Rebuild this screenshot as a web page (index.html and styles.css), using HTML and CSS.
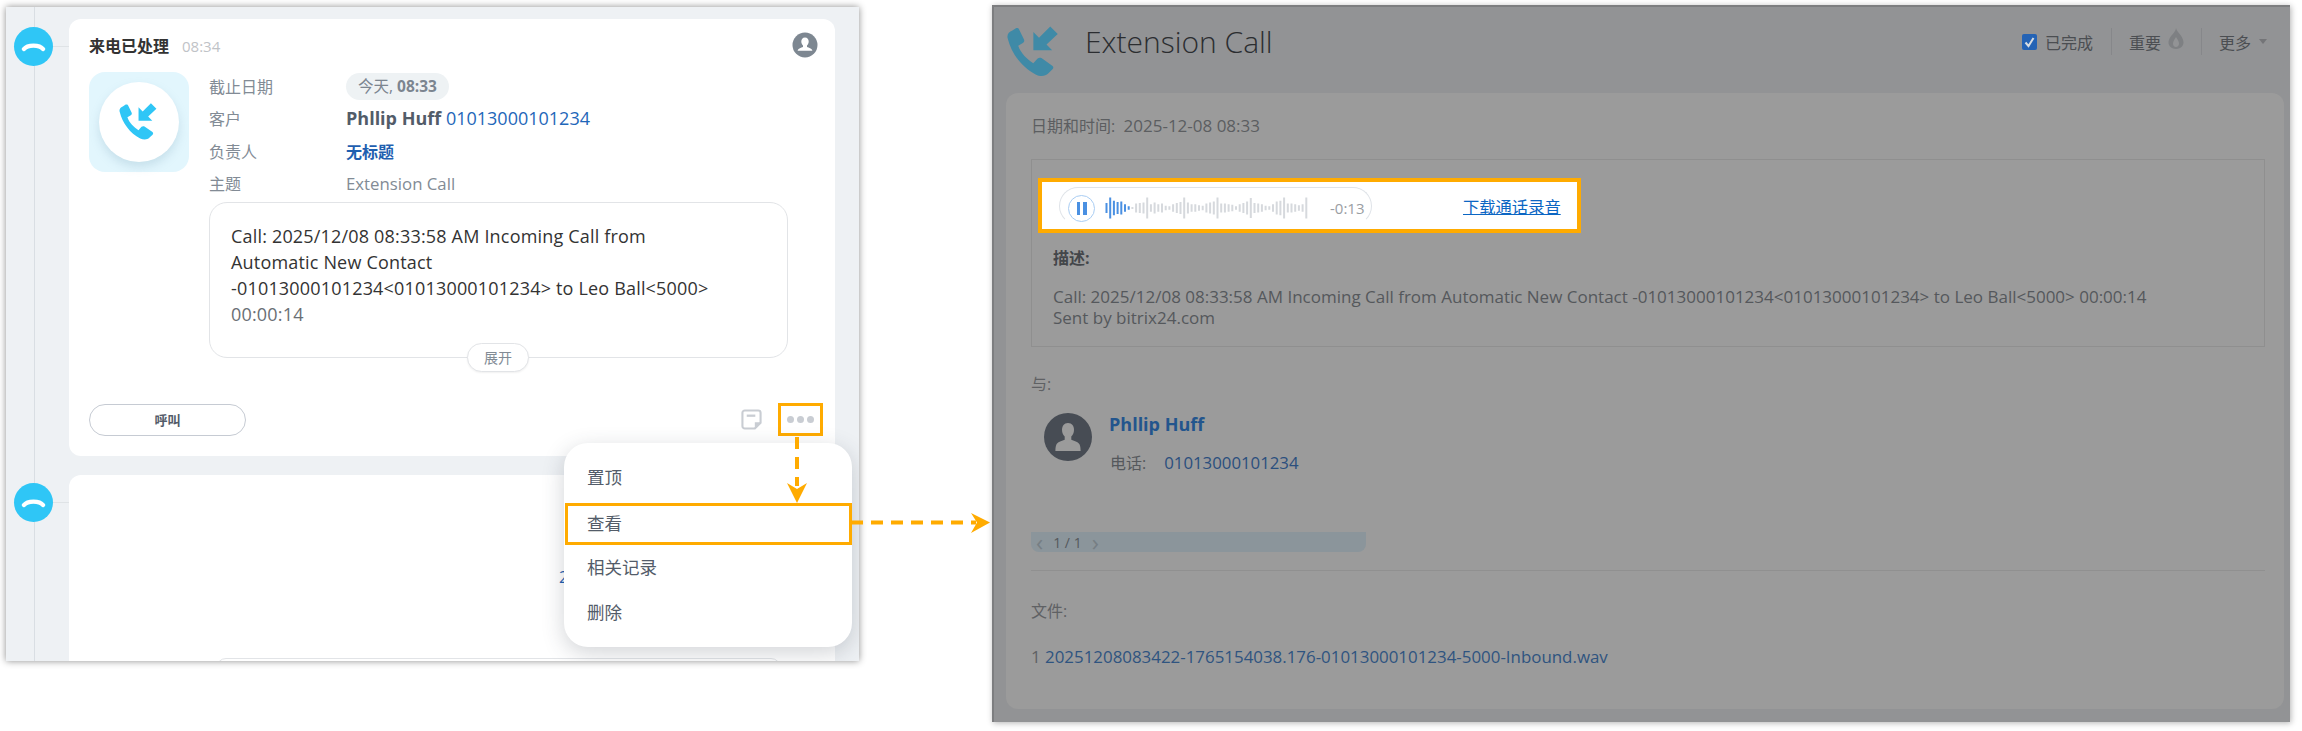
FILE: index.html
```html
<!DOCTYPE html>
<html lang="zh">
<head>
<meta charset="utf-8">
<title>Extension Call</title>
<link rel="stylesheet" href="styles.css">
</head>
<body>
<main class="stage">
  <section class="feed">
    <div class="entry entry-first">
      <div class="rail">
        <span class="rail-dot">
          <svg class="hangup" viewBox="0 0 24 10"><path d="M2.500 7C6 2.500 18 2.500 21.500 7" fill="none" stroke="#fff" stroke-width="4.400" stroke-linecap="round"/></svg>
        </span>
        <span class="rail-tick"></span>
      </div>
      <article class="card">
        <header class="card-head">
          <h2 class="card-title">来电已处理</h2>
          <time class="card-time">08:34</time>
          <svg class="owner" viewBox="0 0 26 26"><circle cx="13" cy="13" r="12.500" fill="#7d8791"/><path d="M13 5.500c2.400 0 3.700 1.900 3.700 4 0 1.800-.8 3.200-1.700 4v1.400c2 .7 4.500 1.500 5.200 3 .2.500 0 .900-.6 .900H6.400c-.6 0-.8-.4-.6-.9.7-1.500 3.200-2.300 5.200-3v-1.400c-.9-.8-1.700-2.200-1.700-4 0-2.100 1.300-4 3.700-4z" fill="#fff"/></svg>
        </header>
        <div class="card-body">
          <div class="tile">
            <span class="tile-disc">
              <svg class="tile-phone" viewBox="0 0 48 48"><path transform="translate(.2 .5) scale(.93 .9)" d="M3 14C2 11 4 8 7 7L10 5C11.500 4.500 12.500 5 13 6.500L17 15C17.500 16.500 17 17.500 16 18L12 20.500C14 27 20 33 25 36L28.500 32C29.500 31 31 31 32 31.500L41 38C42.500 39 42.500 40.500 41.500 41.500L38 45C35 48 31 48 27 46C15 40 6 27 3 14Z" fill="#2fc6f6"/><path d="M23.500 8L28 12.500L37 3.500L43 9.500L34 18L38.500 22.500L23.500 22.500Z" fill="#2fc6f6"/></svg>
            </span>
          </div>
          <div class="details">
            <dl class="facts">
              <dt>截止日期</dt><dd><span class="due">今天, <b>08:33</b></span></dd>
              <dt>客户</dt><dd class="client"><b>Phllip Huff</b> <a>01013000101234</a></dd>
              <dt>负责人</dt><dd class="owner-name">无标题</dd>
              <dt>主题</dt><dd class="subject">Extension Call</dd>
            </dl>
            <div class="message">
              <p>Call: 2025/12/08 08:33:58 AM Incoming Call from<br>Automatic New Contact<br>-01013000101234&lt;01013000101234&gt; to Leo Ball&lt;5000&gt;<br><span class="message-end">00:00:14</span></p>
              <span class="expand">展开</span>
            </div>
          </div>
        </div>
        <footer class="card-foot">
          <button class="call-btn">呼叫</button>
          <svg class="note" viewBox="0 0 22 22"><path d="M4 1.500h14a2.500 2.500 0 0 1 2.500 2.500v10.500l-6 6H4A2.500 2.500 0 0 1 1.500 18V4A2.500 2.500 0 0 1 4 1.500z" fill="none" stroke="#c9cdd3" stroke-width="2.200"/><path d="M6 7h9" stroke="#c9cdd3" stroke-width="2.400"/><path d="M20.500 14h-6v6.500z" fill="#c9cdd3"/></svg>
          <span class="more-box"><i></i><i></i><i></i></span>
        </footer>
      </article>
    </div>
    <div class="entry">
      <div class="rail">
        <span class="rail-dot">
          <svg class="hangup" viewBox="0 0 24 10"><path d="M2.500 7C6 2.500 18 2.500 21.500 7" fill="none" stroke="#fff" stroke-width="4.400" stroke-linecap="round"/></svg>
        </span>
        <span class="rail-tick"></span>
      </div>
      <article class="card card-stub">
        <a class="stub-link">2</a>
        <div class="stub-box"></div>
      </article>
    </div>
    <ul class="menu">
      <li>置顶</li>
      <li class="menu-marked">查看</li>
      <li>相关记录</li>
      <li>删除</li>
    </ul>
  </section>

  <section class="detail">
    <header class="detail-head">
      <svg class="detail-icon" viewBox="0 0 48 48"><path transform="translate(.2 .5) scale(.93 .9)" d="M3 14C2 11 4 8 7 7L10 5C11.500 4.500 12.500 5 13 6.500L17 15C17.500 16.500 17 17.500 16 18L12 20.500C14 27 20 33 25 36L28.500 32C29.500 31 31 31 32 31.500L41 38C42.500 39 42.500 40.500 41.500 41.500L38 45C35 48 31 48 27 46C15 40 6 27 3 14Z" fill="#3f8aa7"/><path d="M23.500 8L28 12.500L37 3.500L43 9.500L34 18L38.500 22.500L23.500 22.500Z" fill="#3f8aa7"/></svg>
      <h1 class="detail-title">Extension Call</h1>
      <div class="tools">
        <span class="tool tool-done">
          <svg class="check" viewBox="0 0 15 16"><rect width="15" height="16" rx="2" fill="#2463b5"/><path d="M3.500 8.500l3 3.500 5-8" fill="none" stroke="#d8dde2" stroke-width="2"/></svg>
          已完成
        </span>
        <span class="tool tool-hot">
          重要
          <svg class="flame" viewBox="0 0 16 21"><path fill-rule="evenodd" d="M8 0c.6 3.400 3.500 5.200 5.500 8.500 2 3.400 3 7 .5 10C12.800 20 10.500 21 8 21s-4.800-1-6-2.500c-2.500-3-1.500-6.500.4-9.500C4.200 6 7.500 4 8 0zm0 9c-1 2-3 4-3 6.500C5 17.500 6.300 19 8 19s3-1.500 3-3.500C11 13 9 11 8 9z" fill="#7e8083"/></svg>
        </span>
        <span class="tool tool-more">更多<i class="caret"></i></span>
      </div>
    </header>
    <div class="sheet">
      <p class="when">日期和时间:&nbsp; <span class="when-date">2025-12-08 08:33</span></p>
      <div class="record">
        <div class="player-mark">
          <div class="player">
            <span class="pause"><i></i><i></i></span>
            <svg class="wave" viewBox="0 0 204 40" preserveAspectRatio="none">
              <path d="M1.500 11v18M5.200 1v38M8.900 7v26M12.600 9v22M16.300 8v24M20 13v14M23.700 17v6" stroke="#4a90e2" stroke-width="2" fill="none"/>
              <path d="M27.400 18v4M31.100 12v16M34.800 11v18M38.500 10v20M42.200 1v38M45.900 13v14M49.600 10v20M53.300 13v14M57 12v16M60.700 16v8M64.400 17v6M68.100 13v14M71.800 11v18M75.500 9v22M79.200 1v38M82.900 10v20M86.600 13v14M90.300 13v14M94 15v10M97.700 16v8M101.400 12v16M105.100 10v20M108.800 8v24M112.500 1v38M116.200 12v16M119.900 12v16M123.600 13v14M127.300 14v12M131 17v6M134.700 13v14M138.400 11v18M142.100 8v24M145.800 2v36M149.500 11v18M153.200 12v16M156.900 13v14M160.600 16v8M164.300 17v6M168 13v14M171.700 8v24M175.400 7v26M179.100 1v38M182.800 12v16M186.500 12v16M190.200 13v14M193.900 15v10M197.600 13v14M201.300 1v38" stroke="#d6d9dd" stroke-width="2" fill="none"/>
            </svg>
            <span class="remain">-0:13</span>
          </div>
          <a class="download">下载通话录音</a>
        </div>
        <h3 class="record-label">描述:</h3>
        <p class="record-text">Call: 2025/12/08 08:33:58 AM Incoming Call from Automatic New Contact -01013000101234&lt;01013000101234&gt; to Leo Ball&lt;5000&gt; 00:00:14<br>Sent by bitrix24.com</p>
      </div>
      <p class="with">与:</p>
      <div class="contact">
        <svg class="avatar" viewBox="0 0 48 48"><circle cx="24" cy="24" r="24" fill="#474c54"/><path d="M24 10c4 0 6 3.300 6 6.800 0 3-1.200 5.400-2.700 6.800v3.200c3.500 1.200 7.300 2.500 8.300 4.700.8 1.800 1 4 1 6.500H11.400c0-2.500.2-4.700 1-6.500 1-2.200 4.800-3.500 8.300-4.700v-3.200c-1.500-1.400-2.700-3.800-2.700-6.800C18 13.300 20 10 24 10z" fill="#9b9b9b"/></svg>
        <div class="contact-info">
          <a class="contact-name">Phllip Huff</a>
          <p class="contact-phone">电话:<a>01013000101234</a></p>
        </div>
      </div>
      <div class="pager"><span class="pager-arrow">‹</span>1 / 1<span class="pager-arrow">›</span></div>
      <hr class="rule">
      <p class="files">文件:</p>
      <p class="file">1 <a>20251208083422-1765154038.176-01013000101234-5000-Inbound.wav</a></p>
    </div>
  </section>

  <svg class="arrows" viewBox="0 0 2302 731">
    <path d="M797 437V486" stroke="#ffab00" stroke-width="4" stroke-dasharray="12 8" fill="none"/>
    <path d="M787 483L797 489L807 483L797 503Z" fill="#ffab00"/>
    <path d="M851 522.500H976" stroke="#ffab00" stroke-width="4" stroke-dasharray="12 8" fill="none"/>
    <path d="M971 513L977 522.500L971 533L990 522.500Z" fill="#ffab00"/>
  </svg>
</main>
</body>
</html>
```
FILE: styles.css
```css
* { box-sizing: border-box; }
html, body { margin: 0; padding: 0; background: #fff; }
body {
  font-family: "Open Sans", "Noto Sans CJK SC", sans-serif;
  width: 2302px;
  height: 731px;
  overflow: hidden;
}
p, h1, h2, h3, dl, dd, ul { margin: 0; padding: 0; }
a { color: inherit; }

.stage {
  position: relative;
  display: flex;
  align-items: flex-start;
  gap: 133px;
  width: 2302px;
  height: 731px;
  padding: 5px 0 0 6px;
}

/* left: activity feed */
.feed {
  position: relative;
  flex: none;
  width: 853px;
  height: 654px;
  margin-top: 2px;
  padding-top: 12px;
  overflow: hidden;
  background: #eef1f4 linear-gradient(#d9dee3, #d9dee3) 28px 0 / 1px 100% no-repeat;
}
.entry { display: flex; margin-bottom: 19px; }
.rail {
  flex: none;
  display: flex;
  align-items: center;
  align-self: flex-start;
  width: 63px;
  margin-top: 8px;
  padding-left: 8px;
}
.rail-dot {
  flex: none;
  display: flex;
  align-items: center;
  justify-content: center;
  width: 39px;
  height: 39px;
  border-radius: 50%;
  background: #2fc6f6;
}
.hangup { width: 25px; height: 10px; }
.rail-tick { flex: 1; height: 1px; background: #dfe3e6; }

.card {
  flex: none;
  width: 766px;
  height: 437px;
  padding: 0 20px;
  border-radius: 12px;
  background: #fff;
}
.card-head { display: flex; align-items: center; height: 53px; }
.card-title { padding-top: 2px; font-size: 16px; font-weight: 700; line-height: 51px; color: #333; }
.card-time { margin-left: 13px; font-size: 15px; color: #bfc3c7; }
.owner { width: 26px; height: 26px; margin: -2px -3px 0 auto; }

.card-body { display: flex; gap: 20px; }
.tile {
  flex: none;
  display: flex;
  align-items: center;
  justify-content: center;
  width: 100px;
  height: 100px;
  border-radius: 16px;
  background: #e2f6fd;
}
.tile-disc {
  display: flex;
  align-items: center;
  justify-content: center;
  width: 80px;
  height: 80px;
  border-radius: 50%;
  background: #fff;
  box-shadow: 0 5px 10px rgba(130, 170, 190, .28);
}
.tile-phone { width: 44px; height: 44px; }

.details { width: 579px; }
.facts {
  display: grid;
  grid-template-columns: 137px 1fr;
  grid-auto-rows: 32.300px;
  align-items: center;
  margin-top: -2px;
  font-size: 16px;
  color: #828b95;
}
.facts dd { white-space: nowrap; }
.due {
  display: inline-block;
  height: 27px;
  padding: 0 12px;
  border-radius: 14px;
  background: #eef2f4;
  font-size: 15.500px;
  line-height: 27px;
  color: #7c8590;
}
.client { font-size: 18px; }
.client b { color: #525c69; }
.client a { color: #1f67b9; }
.owner-name { font-size: 16px; font-weight: 700; color: #1f5fb0; }
.subject { font-size: 16.800px; }

.message {
  position: relative;
  height: 156px;
  margin-top: 3px;
  padding: 20px 20px 0 21px;
  border: 1px solid #e2e4e7;
  border-radius: 18px;
  font-size: 18px;
  letter-spacing: .18px;
  line-height: 26px;
  color: #333;
}
.message-end { color: #6a6f75; }
.expand {
  position: absolute;
  left: 257px;
  bottom: -15px;
  width: 62px;
  height: 29px;
  border: 1px solid #e2e4e7;
  border-radius: 15px;
  background: #fff;
  box-shadow: 0 1px 2px rgba(0, 0, 0, .06);
  text-align: center;
  font-size: 14px;
  letter-spacing: 0;
  line-height: 27px;
  color: #828b95;
}

.card-foot { display: flex; align-items: center; margin-top: 45px; height: 33px; }
.call-btn {
  width: 157px;
  height: 32px;
  border: 1px solid #c6cbd3;
  border-radius: 16px;
  background: #fff;
  font-family: inherit;
  font-size: 13px;
  font-weight: 700;
  color: #535c69;
}
.note { width: 21px; height: 21px; margin-left: auto; margin-right: 16px; }
.more-box {
  display: flex;
  align-items: center;
  justify-content: center;
  gap: 3px;
  width: 45px;
  height: 33px;
  margin-right: -8px;
  border: 3px solid #ffab00;
}
.more-box i { width: 7px; height: 7px; border-radius: 50%; background: #c9cdd3; }

.card-stub { height: 300px; padding-top: 91px; }
.stub-link { display: block; margin-left: 470px; font-size: 16px; line-height: 22px; color: #1f5fb0; }
.stub-box {
  width: 565px;
  height: 80px;
  margin: 70px 0 0 127px;
  border: 1px solid #e2e4e7;
  border-radius: 10px;
}

.menu {
  position: absolute;
  left: 558px;
  top: 436px;
  width: 288px;
  height: 204px;
  padding: 12px 0;
  list-style: none;
  border-radius: 24px;
  background: #fff;
  box-shadow: 0 6px 22px rgba(50, 60, 75, .22);
}
.menu li {
  height: 45px;
  padding-left: 23px;
  font-size: 17.500px;
  line-height: 45px;
  color: #535c69;
}
.menu .menu-marked {
  height: 42px;
  margin: 3px 0 0 1px;
  padding-left: 19px;
  border: 3px solid #ffab00;
  line-height: 35px;
}

/* right: dimmed detail window */
.detail {
  flex: none;
  width: 1298px;
  height: 717px;
  border-top: 2px solid #7d7e80;
  border-left: 2px solid #7d7e80;
  background: #929395;
}
.detail-head { display: flex; align-items: center; height: 86px; padding: 0 23px 17px 10px; }
.detail-icon { flex: none; width: 60px; height: 60px; margin-top: 21px; }
.detail-title { margin: -1px 0 0 21px; font-size: 30px; font-weight: 300; color: #2b2d30; }
.tools { display: flex; align-items: center; margin-left: auto; font-size: 16px; color: #4b4e52; }
.tool { display: flex; align-items: center; height: 27px; }
.tool-done { gap: 8px; padding-right: 18px; }
.tool-hot { gap: 7px; padding: 0 17px; border-left: 1px solid #86878a; border-right: 1px solid #86878a; }
.tool-more { padding-left: 17px; }
.check { width: 15px; height: 16px; }
.flame { width: 16px; height: 21px; margin-top: -6px; }
.caret {
  width: 0;
  height: 0;
  margin-left: 8px;
  border: 4.500px solid transparent;
  border-top: 5px solid #747578;
  border-bottom: 0;
}

.sheet {
  height: 616px;
  margin: 0 6px 0 12px;
  padding: 22px 19px 0 25px;
  border-radius: 12px;
  background: #9b9b9b;
  font-size: 16px;
  color: #55585c;
}
.when { line-height: 22px; color: #5c5e61; }
.when-date { font-size: 17px; }
.record {
  height: 188px;
  margin-top: 22px;
  padding: 18px 6px 0;
  border: 1px solid #8f8f8f;
}
.player-mark {
  display: flex;
  align-items: flex-start;
  width: 543px;
  height: 55px;
  padding: 5px 0 0 17px;
  border: 4px solid #ffab00;
  background: #fff;
}
.player {
  display: flex;
  align-items: center;
  width: 313px;
  height: 38px;
  padding-left: 8px;
  border: 1px solid #dfe3e8;
  border-bottom-color: transparent;
  border-radius: 22px;
}
.pause {
  flex: none;
  display: flex;
  align-items: center;
  justify-content: center;
  gap: 3px;
  width: 27px;
  height: 27px;
  border: 1px solid #a9cdf3;
  border-radius: 50%;
  margin-top: 4px;
}
.pause i { width: 3.500px; height: 13px; background: #4a90e2; }
.wave { flex: none; width: 204px; height: 22px; margin: 4px 0 0 10px; }
.remain { margin: 4px 0 0 21px; font-size: 15px; color: #9a9ea3; }
.download {
  margin: 9px 0 0 91px;
  font-size: 16.300px;
  line-height: 22px;
  color: #0b66c3;
  text-decoration: underline;
}
.record-label { margin: 14px 0 0 15px; font-size: 16px; font-weight: 700; line-height: 22px; color: #43464a; }
.record-text { margin: 17px 0 0 15px; font-size: 17px; line-height: 21px; white-space: nowrap; }
.with { margin-top: 26px; line-height: 22px; color: #5f6164; }
.contact { display: flex; gap: 18px; margin: 17px 0 0 13px; }
.avatar { flex: none; width: 48px; height: 48px; margin-top: 1px; }
.contact-name { display: block; margin-left: -1px; font-size: 18px; font-weight: 700; line-height: 24px; color: #23558d; }
.contact-phone { margin-top: 16px; line-height: 22px; }
.contact-phone a { margin-left: 18px; font-size: 16.800px; color: #2b4f7e; }
.pager {
  display: flex;
  align-items: center;
  gap: 10px;
  width: 335px;
  height: 20px;
  margin-top: 58px;
  padding-left: 5px;
  border-radius: 0 0 8px 8px;
  background: #8b959b;
  font-size: 14px;
  color: #55585c;
}
.pager-arrow { color: #767e84; font-size: 24px; line-height: 18px; }
.rule { height: 1px; margin: 18px 0 0; border: 0; background: #909090; }
.files { margin-top: 29px; line-height: 22px; color: #5f6164; }
.file { margin-top: 24px; font-size: 16.900px; line-height: 22px; color: #5f6164; }
.file a { color: #2f5480; }

.arrows { position: absolute; left: 0; top: 0; width: 2302px; height: 731px; pointer-events: none; }
.stage::before {
  content: "";
  position: absolute;
  left: 6px;
  top: 7px;
  width: 853px;
  height: 654px;
  box-shadow: 0 0 7px rgba(0, 0, 0, .45);
}
.stage::after {
  content: "";
  position: absolute;
  left: 992px;
  top: 5px;
  width: 1298px;
  height: 717px;
  box-shadow: 1px 1px 6px rgba(0, 0, 0, .3);
}
```
